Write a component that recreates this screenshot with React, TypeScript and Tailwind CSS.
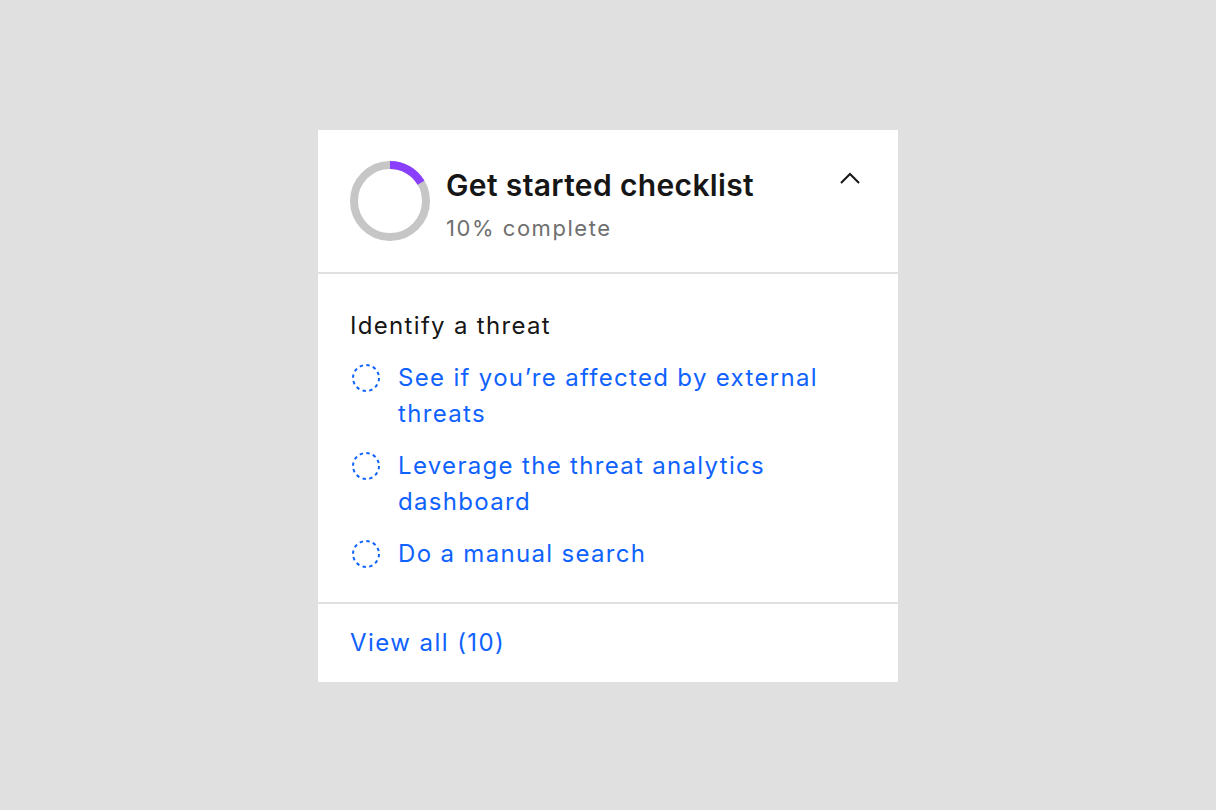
import React from "react";

const DashedCircle = () => (
  <svg width="32" height="36" viewBox="0 0 32 36" className="shrink-0">
    <circle cx="16" cy="18" r="13" fill="none" stroke="#0f62fe" strokeWidth="2" strokeDasharray="3.4 3.4" />
  </svg>
);

const Ring = () => {
  const r = 36;
  const c = 2 * Math.PI * r;
  return (
    <svg width="80" height="80" viewBox="0 0 80 80" className="shrink-0">
      <circle cx="40" cy="40" r={r} fill="none" stroke="#c6c6c6" strokeWidth="8" />
      <circle
        cx="40"
        cy="40"
        r={r}
        fill="none"
        stroke="#8a3ffc"
        strokeWidth="8"
        strokeDasharray={`${c * 0.165} ${c}`}
        transform="rotate(-90 40 40)"
      />
    </svg>
  );
};

export default function App() {
  const items = [
    "See if you\u2019re affected by external threats",
    "Leverage the threat analytics dashboard",
    "Do a manual search",
  ];
  return (
    <div
      className="w-[1216px] h-[810px] bg-[#e0e0e0] flex items-start justify-center pt-[130px]"
      style={{ fontFamily: 'Inter, "Noto Sans", sans-serif' }}
    >
      <div className="w-[580px] bg-white flex flex-col">
        <div className="flex items-start h-[144px] px-8 pt-[31px] border-b-2 border-[#e0e0e0]">
          <Ring />
          <div className="flex flex-col ml-4 mt-[4px] flex-1">
            <div className="text-[30px] leading-[40px] font-semibold text-[#161616] tracking-[0.012em]">Get started checklist</div>
            <div className="text-[22px] leading-[26px] text-[#6f6f6f] mt-[10px] tracking-[0.07em]">10% complete</div>
          </div>
          <svg width="20" height="12" viewBox="0 0 20 12" className="mt-[11px] mr-[6px] shrink-0">
            <path d="M1 11 L10 2 L19 11" fill="none" stroke="#161616" strokeWidth="2" />
          </svg>
        </div>
        <div className="flex flex-col gap-4 px-8 pt-[34px] pb-[30px] border-b-2 border-[#e0e0e0]">
          <div className="text-[24px] leading-[36px] text-[#161616] tracking-[0.055em]">Identify a threat</div>
          {items.map((t) => (
            <div key={t} className="flex items-start gap-4">
              <DashedCircle />
              <div className="text-[24px] leading-[36px] text-[#0f62fe] max-w-[440px] tracking-[0.055em]">{t}</div>
            </div>
          ))}
        </div>
        <div className="flex items-center px-8 h-[78px]">
          <div className="text-[24px] leading-[36px] text-[#0f62fe] tracking-[0.06em]">View all (10)</div>
        </div>
      </div>
    </div>
  );
}
